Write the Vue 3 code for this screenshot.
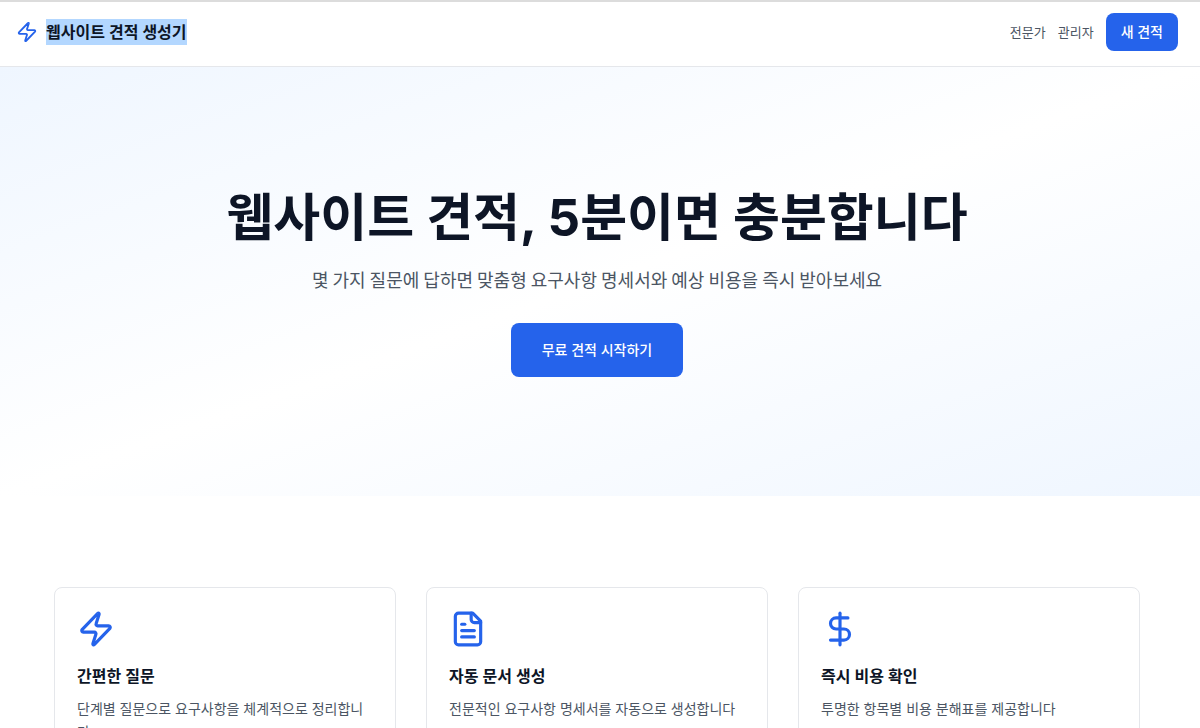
<script setup>
const links = [
  { label: '전문가', href: '#experts' },
  { label: '관리자', href: '#admin' },
]

const features = [
  {
    icon: 'zap',
    title: '간편한 질문',
    text: '단계별 질문으로 요구사항을 체계적으로 정리합니다',
  },
  {
    icon: 'file',
    title: '자동 문서 생성',
    text: '전문적인 요구사항 명세서를 자동으로 생성합니다',
  },
  {
    icon: 'dollar',
    title: '즉시 비용 확인',
    text: '투명한 항목별 비용 분해표를 제공합니다',
  },
]

const zap =
  'M4 14a1 1 0 0 1-.78-1.63l9.9-10.2a.5.5 0 0 1 .86.46l-1.92 6.02A1 1 0 0 0 13 10h7a1 1 0 0 1 .78 1.63l-9.9 10.2a.5.5 0 0 1-.86-.46l1.92-6.02A1 1 0 0 0 11 14z'

const icons = {
  zap: [zap],
  file: [
    'M15 2H6a2 2 0 0 0-2 2v16a2 2 0 0 0 2 2h12a2 2 0 0 0 2-2V7Z',
    'M14 2v4a2 2 0 0 0 2 2h4',
    'M10 9H8',
    'M16 13H8',
    'M16 17H8',
  ],
  dollar: ['M12 2v20', 'M17 5H9.5a3.5 3.5 0 0 0 0 7h5a3.5 3.5 0 0 1 0 7H6'],
}
</script>

<template>
  <div class="page">
    <header class="header">
      <a class="brand" href="#home">
        <svg class="brand-icon" viewBox="0 0 24 24" aria-hidden="true">
          <path :d="zap" />
        </svg>
        <span class="brand-name">웹사이트 견적 생성기</span>
      </a>
      <nav class="nav">
        <a v-for="link in links" :key="link.href" class="nav-link" :href="link.href">{{ link.label }}</a>
        <button type="button" class="button">새 견적</button>
      </nav>
    </header>

    <main>
      <section class="hero">
        <h1 class="hero-title">웹사이트 견적, 5분이면 충분합니다</h1>
        <p class="hero-text">몇 가지 질문에 답하면 맞춤형 요구사항 명세서와 예상 비용을 즉시 받아보세요</p>
        <button type="button" class="button button-large">무료 견적 시작하기</button>
      </section>

      <section class="features">
        <article v-for="feature in features" :key="feature.title" class="card">
          <svg class="card-icon" viewBox="0 0 24 24" aria-hidden="true">
            <path v-for="d in icons[feature.icon]" :key="d" :d="d" />
          </svg>
          <h2 class="card-title">{{ feature.title }}</h2>
          <p class="card-text">{{ feature.text }}</p>
        </article>
      </section>
    </main>
  </div>
</template>

<style>
html {
  scrollbar-width: none;
}

body {
  margin: 0;
  background: #fff;
}
</style>

<style scoped>
.page {
  border-top: 2px solid #dcdcdc;
  color: #0d1526;
  font-family: Inter, "Noto Sans CJK KR", sans-serif;
}

.header {
  display: flex;
  align-items: center;
  justify-content: space-between;
  padding: 11px 22px 15px 16px;
  border-bottom: 1px solid #e5e7eb;
}

.brand {
  display: flex;
  align-items: center;
  gap: 8px;
  color: inherit;
  text-decoration: none;
}

.brand-icon,
.card-icon {
  display: block;
  fill: none;
  stroke: #2563eb;
  stroke-width: 2;
  stroke-linecap: round;
  stroke-linejoin: round;
}

.brand-icon {
  width: 22px;
  height: 22px;
}

.brand-name {
  background: #b3d7ff;
  font-size: 16px;
  font-weight: 600;
  line-height: 26px;
}

.nav {
  display: flex;
  align-items: center;
  gap: 12px;
}

.nav-link {
  color: #4b5563;
  font-size: 13px;
  line-height: 22px;
  text-decoration: none;
}

.button {
  padding: 8px 15px;
  border: 0;
  border-radius: 8px;
  background: #2563eb;
  color: #fff;
  font-family: inherit;
  font-size: 14px;
  font-weight: 500;
  line-height: 22px;
}

.button-large {
  padding: 16px 31px;
}

.hero {
  display: flex;
  flex-direction: column;
  align-items: center;
  padding: 120px 22px 119px 16px;
  background: linear-gradient(to bottom right, #eff6ff, #fff 50%, #eff6ff);
  text-align: center;
}

.hero-title {
  margin: 0 0 15px;
  font-size: 51px;
  font-weight: 700;
  line-height: 62px;
}

.hero-text {
  margin: 0 0 29px;
  color: #4b5563;
  font-family: "Noto Sans CJK KR", sans-serif;
  font-size: 18px;
  line-height: 30px;
}

.features {
  display: grid;
  grid-template-columns: repeat(3, 1fr);
  gap: 30px;
  padding: 91px 60px 91px 54px;
}

.card {
  padding: 22px;
  border: 1px solid #e5e7eb;
  border-radius: 8px;
}

.card-icon {
  width: 38px;
  height: 38px;
  margin-bottom: 15px;
}

.card-title {
  margin: 0 0 8px;
  font-size: 16px;
  font-weight: 600;
  line-height: 26px;
}

.card-text {
  margin: 0;
  color: #4b5563;
  font-size: 14px;
  line-height: 23px;
}
</style>
